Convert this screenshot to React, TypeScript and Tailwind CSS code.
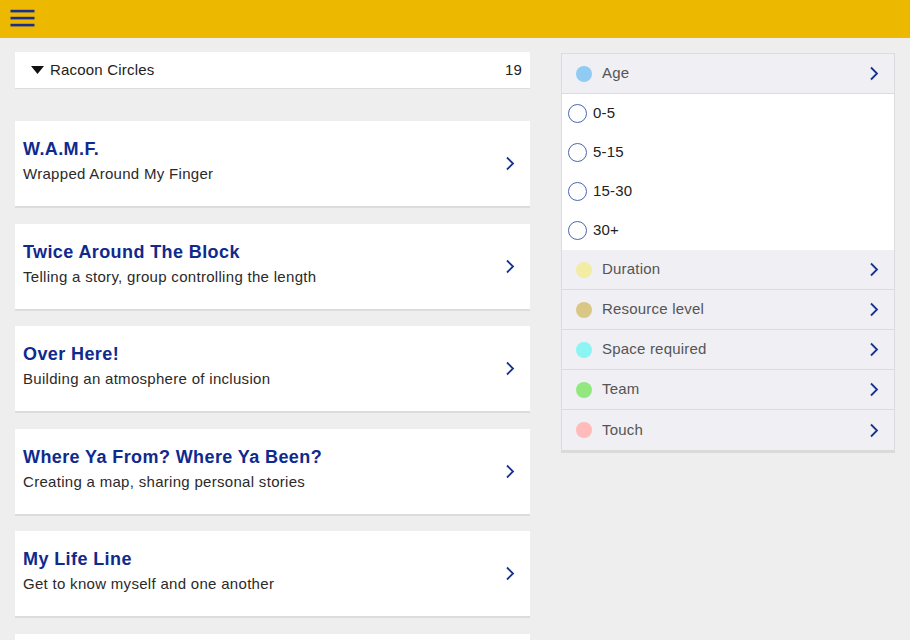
import React from "react";

const activities = [
  { title: "W.A.M.F.", sub: "Wrapped Around My Finger" },
  { title: "Twice Around The Block", sub: "Telling a story, group controlling the length" },
  { title: "Over Here!", sub: "Building an atmosphere of inclusion" },
  { title: "Where Ya From? Where Ya Been?", sub: "Creating a map, sharing personal stories" },
  { title: "My Life Line", sub: "Get to know myself and one another" },
  { title: "", sub: "" },
];

const filters = [
  { label: "Duration", color: "bg-[#f2eca4]" },
  { label: "Resource level", color: "bg-[#d9c786]" },
  { label: "Space required", color: "bg-[#8cf5f3]" },
  { label: "Team", color: "bg-[#92e87e]" },
  { label: "Touch", color: "bg-[#ffbaba]" },
];

function Chevron() {
  return (
    <svg width="10" height="15" viewBox="0 0 10 15" className="shrink-0">
      <polyline points="2,1.5 8,7.5 2,13.5" fill="none" stroke="#17318f" strokeWidth="1.8" />
    </svg>
  );
}

export default function App() {
  return (
    <div className="min-h-[640px] bg-[#eeeeee] font-['Liberation_Sans',Arial,sans-serif]">
      <header className="h-[38px] bg-[#ecb800] pl-[10px] pt-[9px]">
        <svg width="25" height="18" viewBox="0 0 25 18">
          <rect x="0.5" y="0.8" width="24" height="2.6" fill="#1b2f8e" />
          <rect x="0.5" y="7.8" width="24" height="2.6" fill="#1b2f8e" />
          <rect x="0.5" y="14.8" width="24" height="2.6" fill="#1b2f8e" />
        </svg>
      </header>
      <div className="flex gap-[31px] px-[15px] pt-[14px]">
        <div className="flex w-[515px] flex-col">
          <div className="flex h-[37px] items-center border-b border-[#dddddd] bg-white pl-[16px] pr-[8px] text-[15px] tracking-[0.2px] text-[#222]">
            <svg width="13" height="8" viewBox="0 0 13 8" className="mr-[6px]">
              <polygon points="0,0 13,0 6.5,8" fill="#111" />
            </svg>
            <span className="flex-1">Racoon Circles</span>
            <span>19</span>
          </div>
          <div className="mt-[32px] flex flex-col gap-[15.6px]">
            {activities.map((a, i) => (
              <div
                key={i}
                className="flex h-[87px] items-center border-b-2 border-[#dcdcdc] bg-white pl-[8px] pr-[15px]"
              >
                <div className="flex-1 self-start pt-[17px]">
                  <div className="text-[18px] font-bold leading-[22px] tracking-[0.4px] text-[#0f2a8e]">{a.title}</div>
                  <div className="mt-[4px] text-[15px] leading-[20px] tracking-[0.3px] text-[#2a2a2a]">{a.sub}</div>
                </div>
                {a.title && <Chevron />}
              </div>
            ))}
          </div>
        </div>
        <div className="mt-[1px] w-[334px] self-start border-x border-b-[3px] border-t border-[#dcdcdc] border-b-[#dadada]">
          <div className="flex h-[40px] items-center border-b border-[#dcdcdc] bg-[#efeff4] pl-[14px] pr-[15px]">
            <span className="h-[16px] w-[16px] rounded-full bg-[#91cbf4]" />
            <span className="ml-[10px] flex-1 text-[15px] tracking-[0.2px] text-[#555]">Age</span>
            <Chevron />
          </div>
          <div className="bg-white">
            {["0-5", "5-15", "15-30", "30+"].map((o) => (
              <div key={o} className="flex h-[39px] items-center pl-[6px] text-[15px] tracking-[0.2px] text-[#222]">
                <span className="h-[19px] w-[19px] rounded-full border border-[#4a66ac]" />
                <span className="ml-[6px]">{o}</span>
              </div>
            ))}
          </div>
          {filters.map((f, i) => (
            <div
              key={f.label}
              className={`flex h-[40px] items-center bg-[#efeff4] pl-[14px] pr-[15px] ${i < filters.length - 1 ? "border-b border-[#dcdcdc]" : ""}`}
            >
              <span className={`h-[16px] w-[16px] rounded-full ${f.color}`} />
              <span className="ml-[10px] flex-1 text-[15px] tracking-[0.2px] text-[#555]">{f.label}</span>
              <Chevron />
            </div>
          ))}
        </div>
      </div>
    </div>
  );
}
